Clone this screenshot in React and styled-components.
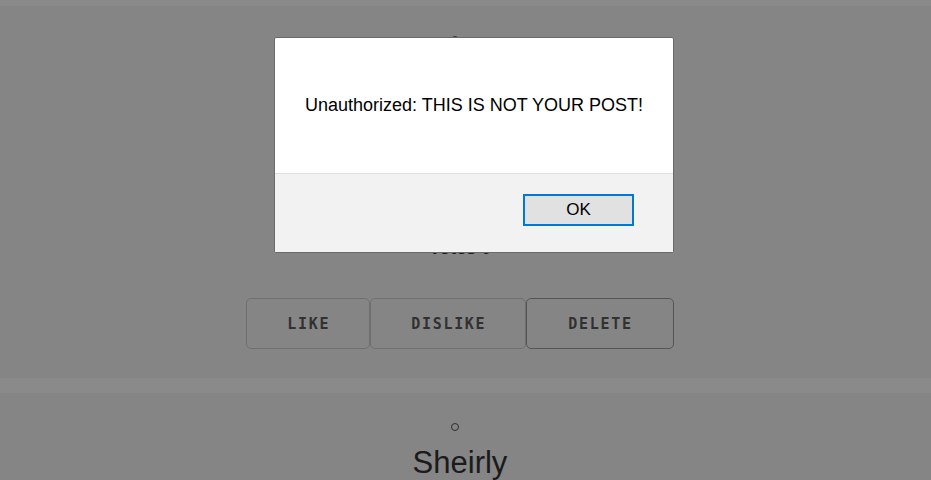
import React from 'react';
import styled, { createGlobalStyle } from 'styled-components';

const GlobalStyle = createGlobalStyle`
  html, body {
    margin: 0;
    padding: 0;
    background: #fff;
    font-family: "Liberation Sans", Arial, sans-serif;
    overflow: hidden;
  }
`;

const Feed = styled.div`
  display: flex;
  flex-direction: column;
  gap: 15px;
  padding-top: 6px;
  height: 480px;
  overflow: hidden;
`;

const Card = styled.div`
  background: #f6f6f6;
  display: flex;
  flex-direction: column;
  align-items: center;
  padding: 30px 11px 29px 0;
  flex-shrink: 0;
`;

const Avatar = styled.div`
  width: 6px;
  height: 6px;
  border: 1.5px solid #555;
  border-radius: 50%;
  margin-left: -10px;
`;

const Name = styled.div`
  margin-top: 14px;
  font-size: 31px;
  color: #333;
  line-height: 36px;
`;

const Votes = styled.div`
  margin-top: ${p => p.$offset}px;
  font-size: 18px;
  font-weight: bold;
  color: #333;
`;

const Actions = styled.div`
  display: flex;
  margin-top: 39px;
`;

const ActionButton = styled.button`
  height: 51px;
  padding: ${p => (p.$strong ? '0 40px 0 41px' : '0 39px 0 40px')};
  background: transparent;
  border: 1px solid ${p => (p.$strong ? '#9e9e9e' : '#cecece')};
  border-radius: 5px;
  font-family: "DejaVu Sans Mono", monospace;
  font-weight: bold;
  font-size: 15px;
  letter-spacing: 1.7px;
  color: #5c5c5c;
  cursor: pointer;
`;

const Overlay = styled.div`
  position: fixed;
  inset: 0;
  background: rgba(0, 0, 0, 0.46);
`;

const Dialog = styled.div`
  margin: 37px 0 0 274px;
  width: 398px;
  background: #fff;
  border: 1px solid #6a6a6a;
  border-radius: 2px;
  overflow: hidden;
`;

const Message = styled.div`
  height: 135px;
  display: flex;
  align-items: center;
  justify-content: center;
  font-size: 18px;
  color: #000;
  padding-bottom: 1px;
  box-sizing: border-box;
`;

const Footer = styled.div`
  height: 79px;
  background: #f2f2f2;
  border-top: 1px solid #dfdfdf;
  display: flex;
  justify-content: flex-end;
  align-items: flex-start;
  padding: 20px 39px 0 0;
  box-sizing: border-box;
`;

const OkButton = styled.button`
  width: 111px;
  height: 32px;
  background: #e1e1e1;
  border: 2px solid #0078d7;
  font-family: "Liberation Sans", Arial, sans-serif;
  font-size: 17px;
  color: #000;
  padding: 0;
`;

const posts = [
  { author: 'Sheirly', votes: 0 },
  { author: 'Sheirly', votes: 0 },
];

export default function App() {
  return (
    <>
      <GlobalStyle />
      <Feed>
        {posts.map((post, i) => (
          <Card key={i}>
            <Avatar />
            <Name>{post.author}</Name>
            <Votes $offset={144}>Votes {post.votes}</Votes>
            <Actions>
              <ActionButton>LIKE</ActionButton>
              <ActionButton>DISLIKE</ActionButton>
              <ActionButton $strong>DELETE</ActionButton>
            </Actions>
          </Card>
        ))}
      </Feed>
      <Overlay>
        <Dialog>
          <Message>Unauthorized: THIS IS NOT YOUR POST!</Message>
          <Footer>
            <OkButton>OK</OkButton>
          </Footer>
        </Dialog>
      </Overlay>
    </>
  );
}
